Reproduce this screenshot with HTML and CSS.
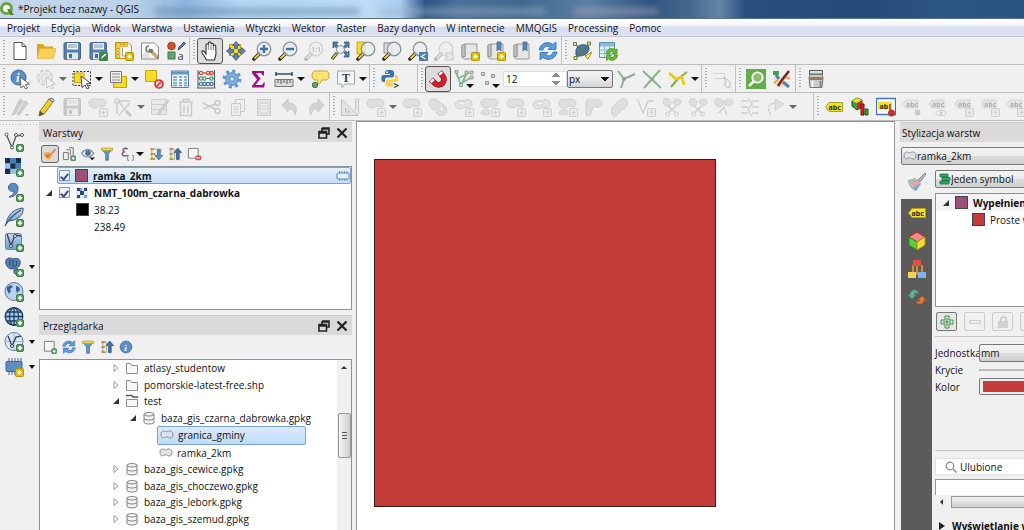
FILE: index.html
```html
<!DOCTYPE html>
<html lang="pl">
<head>
<meta charset="utf-8">
<title>*Projekt bez nazwy - QGIS</title>
<link rel="stylesheet" href="styles.css">
</head>
<body>
<svg class="sprite" aria-hidden="true">
<defs>
<linearGradient id="gb" x1="0" y1="0" x2="0" y2="1"><stop offset="0" stop-color="#c3d9ee"/><stop offset="1" stop-color="#6f9ccb"/></linearGradient>
<symbol id="b-plus" viewBox="0 0 20 20"><rect x="12.500" y="12.500" width="7" height="7" rx="1.500" fill="#5b9b62" stroke="#3f7d48"/><path d="M16 13.800v4.400M13.800 16h4.400" stroke="#fff" stroke-width="1.600"/></symbol>
<symbol id="b-star" viewBox="0 0 20 20"><rect x="11.500" y="11.500" width="8" height="8" rx="1" fill="#e2b714" stroke="#b28f10"/><path d="M15.500 13v5M13 15.500h5M13.800 13.800l3.400 3.400M17.200 13.800l-3.400 3.400" stroke="#fff8d0"/></symbol>
<symbol id="b-box" viewBox="0 0 20 20"><rect x="11.500" y="11.500" width="8" height="8" rx="1" fill="#ddd" stroke="#888"/><path d="M15.500 13.500v4M13.500 15.500h4" stroke="#888"/></symbol>
<symbol id="lens" viewBox="0 0 20 20"><path d="M7.500 12.500L2 18" stroke="#2d2d1d" stroke-width="3.600" stroke-linecap="round"/><path d="M7 13l-4.500 4.500" stroke="#edcf3a" stroke-width="1.800"/><circle cx="12" cy="8" r="6.800" fill="#e9eef2" fill-opacity=".8" stroke="#8a9299" stroke-width="1.300"/></symbol>
<symbol id="new" viewBox="0 0 20 20"><path d="M4 1.500h8l4 4v13H4z" fill="#fff" stroke="#555"/><path d="M12 1.500v4h4" fill="none" stroke="#555"/></symbol>
<symbol id="open" viewBox="0 0 20 20"><path d="M1 17V3h6l1.500 2.500H17V9" fill="#d9a521"/><path d="M1 17.500L3.500 7.500H20l-2.500 10z" fill="#f8cf58" stroke="#e3b02f" stroke-width=".6"/></symbol>
<symbol id="save" viewBox="0 0 20 20"><rect x="2" y="1.500" width="16.500" height="17" rx="1.500" fill="#5580ad" stroke="#3f6691"/><path d="M5 2h11v6.500H5z" fill="#eef3f7"/><path d="M6 4h9M6 6h9" stroke="#8298ae"/><path d="M5 11.500h11v7H5z" fill="#dfe5ea"/><path d="M7 13h3v4H7z" fill="#456d98"/></symbol>
<symbol id="saveas" viewBox="0 0 20 20"><use href="#save"/><rect x="11" y="11" width="9" height="9" rx="1.500" fill="#3f8549"/><path d="M13 18l1-2.500 3.500-3 1 1-3.500 3z" fill="#fff"/></symbol>
<symbol id="layout" viewBox="0 0 20 20"><path d="M1.500 1.500H14l3.500 3.500v12.500h-16z" fill="#fff" stroke="#b99115"/><path d="M2 2h11.500v3.500H6V17H2z" fill="#f5cf43" stroke="#c79c1b" stroke-width=".7"/><path d="M4 7v1m0 2v1m0 2v1M7 3v1m3-1v1" stroke="#8c6b0c"/><path d="M8.500 7v8h3" fill="none" stroke="#999"/><use href="#b-star"/></symbol>
<symbol id="laymgr" viewBox="0 0 20 20"><path d="M1.500 2h13l4 4v12h-17z" fill="#fff" stroke="#888"/><path d="M2 14l4-4 6 7H2z" fill="#e3e3e3"/><path d="M10 9l7 7" stroke="#777" stroke-width="3" stroke-linecap="round"/><path d="M12.500 11.500l4.500 4.500" stroke="#e3bd37" stroke-width="2"/><path d="M9 5a3 3 0 1 0 3 3" fill="none" stroke="#777" stroke-width="1.500"/></symbol>
<symbol id="style" viewBox="0 0 20 20"><circle cx="5.500" cy="5" r="3.800" fill="#d0532d" stroke="#a63c20"/><path d="M12 9l1-3 5-5 1.500 1.500-5 5z" fill="#5b7fa6" stroke="#38577b"/><rect x="2" y="11" width="7" height="7" fill="#62a56b" stroke="#3c7c45"/><text x="11.500" y="18.500" class="g10">a</text></symbol>
<symbol id="hand" viewBox="0 0 20 20"><path d="M6.500 19C5 16 3 13.500 2 11.500c-.6-1.800 1.400-2.200 2.300-.8L6 13V4c0-1.700 2.200-1.700 2.300 0L8.500 2c.2-1.600 2.300-1.500 2.400 0l.2 1.200c.3-1.400 2.200-1.200 2.300.2v1.500c.3-1.300 2.200-1.100 2.300.3L16 13l-1.500 6z" fill="#fff" stroke="#333" stroke-width="1.100"/><path d="M8.300 4v5M11 3.500V9M13.400 5v4" stroke="#555" stroke-width=".8"/></symbol>
<symbol id="pansel" viewBox="0 0 20 20"><rect x="3.500" y="3.500" width="11" height="11" fill="#f5dd27" stroke="#bd9e13"/><path d="M10 .500l3.500 4h-2v3h-3v-3h-2zM10 19.500l3.500-4h-2v-3h-3v3h-2zM.500 10l4-3.500v2h3v3h-3v2zM19.500 10l-4-3.500v2h-3v3h3v2z" fill="#6085b0" stroke="#34567f" stroke-width=".8"/></symbol>
<symbol id="zin" viewBox="0 0 20 20"><use href="#lens"/><path d="M12 4v8M8 8h8" stroke="#41729f" stroke-width="2.400"/></symbol>
<symbol id="zout" viewBox="0 0 20 20"><use href="#lens"/><path d="M8 8h8" stroke="#41729f" stroke-width="2.400"/></symbol>
<symbol id="z11" viewBox="0 0 20 20"><use href="#lens"/><text x="7" y="11" class="g8">1:1</text></symbol>
<symbol id="zfull" viewBox="0 0 20 20"><path d="M3 1h5L6.500 3.500 9 6 7 7 4.500 5.500 3 7zM19 1h-5l1.500 2.500L13 6l2 1 2.500-1.500L19 7zM19 16h-5l1.500-2.500L13 11l2-1 2.500 1.500L19 10z" fill="#4c7dad" stroke="#2f587f" stroke-width=".8"/><circle cx="10.500" cy="8.500" r="4" fill="#eee" stroke="#888"/><path d="M7 12l-5 6" stroke="#333" stroke-width="3.200"/><path d="M6.500 12.500l-4 5" stroke="#edcf3a" stroke-width="1.500"/></symbol>
<symbol id="zsel" viewBox="0 0 20 20"><path d="M1 1h8v12H1z" fill="#f5dd27" stroke="#c2a318"/><use href="#lens"/></symbol>
<symbol id="zlay" viewBox="0 0 20 20"><path d="M2 2h8v10H2z" fill="#ddd" stroke="#888"/><use href="#lens"/></symbol>
<symbol id="zlast" viewBox="0 0 20 20"><use href="#lens"/><rect x="11" y="11" width="9" height="9" fill="#4c7dad"/><path d="M17.500 13l-4 2.500 4 2.500" fill="none" stroke="#fff" stroke-width="1.400"/></symbol>
<symbol id="znext" viewBox="0 0 20 20"><use href="#lens"/><rect x="11" y="11" width="9" height="9" fill="#aaa"/><path d="M13.500 13l4 2.500-4 2.500" fill="none" stroke="#fff" stroke-width="1.400"/></symbol>
<symbol id="book" viewBox="0 0 20 20"><path d="M2 4v12.500L4.500 18H17V3H5v12.500H2.500" fill="#e6e6e6" stroke="#999"/><path d="M2 4l3-1v12.500H2z" fill="#c4c4c4" stroke="#888" stroke-width=".7"/></symbol>
<symbol id="mapnew" viewBox="0 0 20 20"><use href="#book"/><use href="#b-star"/></symbol>
<symbol id="bmnew" viewBox="0 0 20 20"><use href="#book"/><path d="M11 1h4v9l-2-2-2 2z" fill="#5b86b5" stroke="#34608f" stroke-width=".7"/><use href="#b-star"/></symbol>
<symbol id="bm" viewBox="0 0 20 20"><use href="#book"/><path d="M11 1h4v9l-2-2-2 2z" fill="#5b86b5" stroke="#34608f" stroke-width=".7"/></symbol>
<symbol id="refresh" viewBox="0 0 20 20"><path d="M1 9C2 3 9-1 15 3.500L18 1v7.500h-8L12.500 6C9 4 5.500 6 5 9z" fill="#5b9bd8" stroke="#2f70b0" stroke-width=".8"/><path d="M19 11c-1 6-8 10-14 5.500L2 19v-7.500h8L7.500 14c3.500 2 7 0 7.500-3z" fill="#5b9bd8" stroke="#2f70b0" stroke-width=".8"/></symbol>
<symbol id="topo" viewBox="0 0 20 20"><path d="M4 10C4 6 8 3 13 4c5 0 5 5 2 8s-9 4-11 2z" fill="#4d79a8" stroke="#2f577f"/><path d="M3 3l8 7 6-7M4 17l7-7 4 7" fill="none" stroke="#567a47" stroke-width="1.200"/><path d="M1.500 1.500h3v3h-3zM15.500 1h3v3h-3zM2 15.500h3v3H2z" fill="#f4e68b" stroke="#667d3a"/><path d="M13 15l3 3 4-7z" fill="#ffe98a" stroke="#a38a2c"/></symbol>
<symbol id="tabref" viewBox="0 0 20 20"><path d="M1.500 1.500h15v15h-15z" fill="#e5f0f7" stroke="#5d92b5"/><path d="M2 2h14v3.500H2z" fill="#8fbad6"/><path d="M1.500 9h15M1.500 12.500h15M6.500 2v14M11.500 2v14" stroke="#8fbad6"/><path d="M8 13c0-5 6-7 9-4l2-1v5h-5l1.500-2c-2-1.500-4 0-4.500 2zM19.500 14c0 5-6 7-9 4l-2 1.500V14h5L12 16c2 1.500 4.500 0 4.500-2z" fill="#6abd2e" stroke="#3f8a14" stroke-width=".7"/></symbol>
<symbol id="info" viewBox="0 0 20 20"><circle cx="8.500" cy="8.500" r="7.500" fill="#5c8fc6" stroke="#3c6c9f"/><text x="6" y="13" class="gi">i</text><path d="M10 8l9.500 7-4 .500 2 3.500-2 1-2-3.500L11 19z" fill="#fff" stroke="#444" stroke-width=".8"/></symbol>
<symbol id="action" viewBox="0 0 20 20"><circle cx="9" cy="8.500" r="7" fill="none" stroke="#999" stroke-width="2.500" stroke-dasharray="4 1.500"/><circle cx="9" cy="8.500" r="4" fill="#ddd" stroke="#888"/><path d="M10 8l9.500 7-4 .500 2 3.500-2 1-2-3.500L11 19z" fill="#fff" stroke="#444" stroke-width=".8"/></symbol>
<symbol id="select" viewBox="0 0 20 20"><path d="M1 2.500h17.500v14H1z" fill="none" stroke="#333" stroke-dasharray="2 1.500"/><path d="M2.500 4H12v9.500H2.500z" fill="#f5dd27" stroke="#c2a318"/><path d="M9 7l10 7.500-4.500.300L17 19l-2 1-2-4-3 2.500z" fill="#fff" stroke="#333" stroke-width=".9"/></symbol>
<symbol id="selval" viewBox="0 0 20 20"><path d="M5.500 7.500h13v11h-13z" fill="#f5dd27" stroke="#c2a318"/><path d="M2.500 2.500h11v11h-11z" fill="#f2f2ee" stroke="#777"/><path d="M4 5h8M4 8h8M4 11h8" stroke="#888"/></symbol>
<symbol id="desel" viewBox="0 0 20 20"><path d="M1.500 1.500h11v11h-11z" fill="#f5dd27" stroke="#c2a318"/><circle cx="15" cy="15" r="4" fill="#f4c9c9" stroke="#d2353b" stroke-width="1.700"/><path d="M12.500 17.500l5-5" stroke="#d2353b" stroke-width="1.500"/></symbol>
<symbol id="table" viewBox="0 0 20 20"><path d="M1.500 2h17v16.500h-17z" fill="#eaf2fa" stroke="#4d80b4"/><path d="M2 2.500h16v3H2z" fill="#6597cb"/><path d="M3 8h4M3 11h4M3 14h4M3 16.500h4M9 8h3M9 11h3M9 14h3M9 16.500h3M14 8h3M14 11h3M14 14h3M14 16.500h3" stroke="#7298be" stroke-width="1.300"/></symbol>
<symbol id="abacus" viewBox="0 0 20 20"><path d="M2 1v18M18.500 1v18M2 4h16.500M2 9.500h16.500M2 15h16.500M1 19h18.500" stroke="#555" fill="none"/><g stroke-width="1.200" fill="#fff"><g stroke="#d4403a"><circle cx="5" cy="4" r="1.600"/><circle cx="12" cy="4" r="1.600"/><circle cx="15.500" cy="4" r="1.600"/></g><g stroke="#4b9a56"><circle cx="5" cy="9.500" r="1.600"/><circle cx="8.500" cy="9.500" r="1.600"/><circle cx="15.500" cy="9.500" r="1.600"/></g><g stroke="#4377ad"><circle cx="5" cy="15" r="1.600"/><circle cx="8.500" cy="15" r="1.600"/><circle cx="12" cy="15" r="1.600"/><circle cx="15.500" cy="15" r="1.600"/></g></g></symbol>
<symbol id="gear" viewBox="0 0 20 20"><circle cx="10" cy="10" r="8" fill="none" stroke="#5f95d1" stroke-width="3" stroke-dasharray="3.100 3.180"/><circle cx="10" cy="10" r="6.300" fill="#7dace0" stroke="#4f86c2"/><circle cx="10" cy="10" r="2.200" fill="#f0f0f0" stroke="#4f86c2"/></symbol>
<symbol id="sigma" viewBox="0 0 20 20"><path d="M4 2h12v4.500h-1.500C14 4.500 13 4 11.500 4H8l4.500 5.500L7.500 16H13c1.500 0 2.300-1 2.700-2.500H17L16 18.500H4V17l5-6.500L4 4z" fill="#9b1089"/></symbol>
<symbol id="ruler" viewBox="0 0 20 20"><path d="M2 5h16M2 3v4M18 3v4" stroke="#2b4d72" stroke-width="1.500"/><path d="M1 10.500h18v7H1z" fill="#ddd" stroke="#777"/><path d="M4 11v3M7 11v4M10 11v3M13 11v4M16 11v3" stroke="#555"/></symbol>
<symbol id="tip" viewBox="0 0 20 20"><path d="M5 2h11c4 0 4 9 0 9h-4c-1 3-3 4-5 5l1-5H5C1 11 1 2 5 2z" fill="#f7e474" stroke="#bba937"/><circle cx="5" cy="16" r="2.700" fill="#67a06f" stroke="#407649"/></symbol>
<symbol id="annot" viewBox="0 0 20 20"><path d="M1.500 2h17v13H9l-3 3.500V15H1.500z" fill="#f3f7f9" stroke="#9aa9b2"/><text x="6" y="12.500" class="gt">T</text></symbol>
<symbol id="python" viewBox="0 0 20 20"><path d="M9 1c-4 0-4 1.500-4 4h5v1H3.500C.500 6 .500 13 3.500 13H5v-2c0-2 1-2.500 3-2.500h4c1.500 0 2.200-1 2.200-2.200V4C14.200 1.500 12 1 9 1z" fill="#3b74a8"/><path d="M10 17.500c4 0 4-1.500 4-3.500H9.500v-1H16c3 0 3-7 0-7h-1v2.500c0 1.500-1 2-3 2H8c-1.500 0-2.500.800-2.500 2.200V15c0 2 2 2.500 4.500 2.500z" fill="#fbd043"/><circle cx="7" cy="3.200" r=".9" fill="#fff"/><path d="M14 14.500l4 2-4 2" fill="none" stroke="#444" stroke-width="1.300"/></symbol>
<symbol id="magnet" viewBox="0 0 20 20"><path d="M3 10.500l4.500 4.300c5 3.700 11.500-3 7-8L11.500 3" fill="none" stroke="#8e0d14" stroke-width="5.600"/><path d="M3.300 10.800l4.200 4c5 3.700 11.500-3 7-8L11.800 3.400" fill="none" stroke="#d3202a" stroke-width="4.200"/><path d="M3.300 10.800l1.900 1.800M11.800 3.400l1.500 1.900" stroke="#fff" stroke-width="4.200"/></symbol>
<symbol id="vsnap" viewBox="0 0 20 20"><path d="M2 3l5 13 6-12M5 9l10-5M8 14l8-5" fill="none" stroke="#86b68c" stroke-width="1.800"/><path d="M1 1.500h3v3H1zM11 2h3v3h-3zM16 2h3v3h-3zM16 7h3v3h-3zM5.500 14.500h3v3h-3z" fill="#ccc" stroke="#839587" stroke-width=".8"/><path d="M12 15h8l-4 4z" fill="#111"/></symbol>
<symbol id="dots" viewBox="0 0 20 20"><path d="M1.500 3.500h3v3h-3zM11.500 5.500h3v3h-3zM5.500 12.500h3v3h-3z" fill="#ccc" stroke="#999"/><path d="M12 15h8l-4 4z" fill="#111"/></symbol>
<symbol id="tr1" viewBox="0 0 20 20"><path d="M2 2l6 8-3 9M8 10l11-5" fill="none" stroke="#86b68c" stroke-width="2"/><circle cx="8" cy="10" r="2" fill="#999"/></symbol>
<symbol id="tr2" viewBox="0 0 20 20"><path d="M1 2l18 17M18 1L2 19" stroke="#86b68c" stroke-width="2"/><circle cx="10" cy="10.500" r="1.800" fill="#999"/></symbol>
<symbol id="tr3" viewBox="0 0 20 20"><path d="M3 18l5-6 3-3 8-6" fill="none" stroke="#7caf4c" stroke-width="2"/><path d="M1 4l7 6 6-2 2 8" fill="none" stroke="#ecc715" stroke-width="2.600"/></symbol>
<symbol id="advdig" viewBox="0 0 20 20"><path d="M1.500 4.500h11v5h-11" fill="none" stroke="#777" stroke-dasharray="2 1"/><path d="M12 8l6 5v5l-3 1-3-4 2-1z" fill="#eee" stroke="#555"/></symbol>
<symbol id="search" viewBox="0 0 20 20"><path d="M0 0h20v20H0z" fill="#65ac49"/><circle cx="11.500" cy="8.500" r="5.200" fill="#84c168" stroke="#fff" stroke-width="1.800"/><path d="M7.500 12.500L3 17" stroke="#fff" stroke-width="2.500"/></symbol>
<symbol id="tools" viewBox="0 0 20 20"><path d="M1 2h6v4H1z" fill="#3fa551"/><path d="M2 9l7-2 8 8-6 4-8-3z" fill="#f1e2b4"/><path d="M4 6l3 4M11 13l6 5" stroke="#4d82bf" stroke-width="3"/><path d="M17 2l-7 9-4 6" stroke="#7c2420" stroke-width="2.600" fill="none"/><path d="M2 14l4-3M14 8l4 2" stroke="#e7a34f" stroke-width="2"/></symbol>
<symbol id="jar" viewBox="0 0 20 20"><path d="M4 5h12l1 4-1 9.500H4L3 9z" fill="#c9c9c9" stroke="#777"/><path d="M3.500 1.500h13v3.500h-13z" fill="#e2e2e2" stroke="#555"/><path d="M3 8h14v3H3z" fill="#a67462"/><path d="M6.500 12v6" stroke="#fff" stroke-width="2"/><path d="M14.500 12v6" stroke="#888" stroke-width="2"/></symbol>
<symbol id="pencils" viewBox="0 0 20 20"><path d="M2 18L10 2l3 2-8 13zM7 18l8-14 3 2-8 11z" fill="#888" stroke="#666"/><path d="M15 17h4l-2 2z" fill="#222"/></symbol>
<symbol id="pencil" viewBox="0 0 20 20"><path d="M4 14L13 2l4 3-9 12-5 2z" fill="#f0d02f" stroke="#8e7a1b"/><path d="M13 2l4 3 1-1.500c0-2-3-3-4-2z" fill="#ccc" stroke="#777"/><path d="M3 19l1-5 4 3z" fill="#555"/></symbol>
<symbol id="blob" viewBox="0 0 20 20"><path d="M1 6c0-4 5-5 8-3 3-2 9-1 9 3 0 5-5 4-7 3-3 3-10 3-10-3z" fill="#bbb" stroke="#888"/></symbol>
<symbol id="addf" viewBox="0 0 20 20"><use href="#blob"/><use href="#b-box"/></symbol>
<symbol id="ring" viewBox="0 0 20 20"><path d="M1 8c0-4 5-6 8-4 3-3 9-1 9 2 0 5-4 5-7 4-3 3-10 2-10-2z" fill="#ccc" stroke="#888"/><ellipse cx="8" cy="6.500" rx="3.500" ry="1.800" fill="#fff" stroke="#888"/><use href="#b-box"/></symbol>
<symbol id="part" viewBox="0 0 20 20"><use href="#blob"/><path d="M1 17c0-4 3-5 8-4v5z" fill="#bbb" stroke="#888"/><use href="#b-box"/></symbol>
<symbol id="simp" viewBox="0 0 20 20"><path d="M1 5c1-5 9-3 11 1 7 1 9 9 4 12-5 2-8-1-8-5-5 0-7-4-7-8z" fill="#bbb" stroke="#888"/><path d="M10 10h7l-3 6z" fill="#eee" stroke="#888"/></symbol>
<symbol id="offset" viewBox="0 0 20 20"><path d="M2 17C0 11 3 9 9 4c4-5 10-1 8 4-2 4-6 5-9 9-2 3-5 3-6 0z" fill="#bbb" stroke="#888"/></symbol>
<symbol id="resh" viewBox="0 0 20 20"><path d="M2 18V6c0-5 5-4 8-3 4-1 9 0 8 4s-6 3-9 3l-2 6c-1 3-4 3-5 2z" fill="#bbb" stroke="#888"/></symbol>
<symbol id="node" viewBox="0 0 20 20"><path d="M3 2v15M3 4h13M4 4l11 13M16 6L5 18" fill="none" stroke="#888" stroke-width="1.500"/><path d="M1 2h4v4H1z" fill="#ccc" stroke="#888"/><path d="M12 14l5 5" stroke="#777" stroke-width="3"/></symbol>
<symbol id="multi" viewBox="0 0 20 20"><path d="M1.500 2.500h15v15h-15zM1.500 7.500h15M1.500 12.500h15" fill="#ddd" stroke="#888"/><path d="M7 17L17 3l2 1L9 18z" fill="#999" stroke="#777"/></symbol>
<symbol id="trash" viewBox="0 0 20 20"><path d="M3 5h14M7 5V2.500h6V5M4.500 5v13.500h11V5M8 8v8M12 8v8" fill="none" stroke="#777" stroke-width="1.500"/></symbol>
<symbol id="cut" viewBox="0 0 20 20"><path d="M1 6l12 6M1 12l12-5" stroke="#777" stroke-width="1.600"/><circle cx="15.500" cy="6" r="2.500" fill="none" stroke="#777" stroke-width="1.500"/><circle cx="15.500" cy="14" r="2.500" fill="none" stroke="#777" stroke-width="1.500"/></symbol>
<symbol id="copy" viewBox="0 0 20 20"><path d="M7.500 2.500h9v12h-9z" fill="#eee" stroke="#777"/><path d="M3.500 6.500h9v12h-9z" fill="#eee" stroke="#777"/><path d="M5.500 10h5M5.500 12.500h5M5.500 15h5" stroke="#888"/></symbol>
<symbol id="paste" viewBox="0 0 20 20"><path d="M3.500 2.500h13v16h-13z" fill="#ccc" stroke="#777"/><path d="M6 6h8v10H6z" fill="#eee" stroke="#888"/><path d="M7.500 9h5M7.500 12h5" stroke="#888"/></symbol>
<symbol id="undo" viewBox="0 0 20 20"><path d="M2 8l6-6v4c8 0 10 5 7 12-1-5-3-6-7-6v3z" fill="#999" stroke="#777"/></symbol>
<symbol id="redo" viewBox="0 0 20 20"><path d="M18 8l-6-6v4c-8 0-10 5-7 12 1-5 3-6 7-6v3z" fill="#999" stroke="#777"/></symbol>
<symbol id="tri" viewBox="0 0 20 20"><path d="M1.500 2v16.500H18z" fill="#ccc" stroke="#555"/><path d="M5.500 11v4h4z" fill="#fff" stroke="#555"/><path d="M15.500 14V2h3v15" fill="#ddd" stroke="#666"/></symbol>
<symbol id="vline" viewBox="0 0 20 20"><path d="M2 3l5 13L12 4h6" fill="none" stroke="#888" stroke-width="1.300"/><circle cx="2" cy="3" r="1.500" fill="#bbb"/><use href="#b-box"/></symbol>
<symbol id="split" viewBox="0 0 20 20"><path d="M1 5c0-5 7-4 8 0 0 5-7 6-8 0zM11 5c1-4 8-4 8 0s-7 5-8 0z" fill="#bbb" stroke="#888"/><path d="M6 9l8 7M14 9l-8 7" stroke="#888" stroke-width="1.400"/><circle cx="5.500" cy="17" r="2" fill="none" stroke="#888"/><circle cx="14.500" cy="17" r="2" fill="none" stroke="#888"/></symbol>
<symbol id="merge" viewBox="0 0 20 20"><path d="M1 5c0-5 7-4 9 0 2-4 9-4 9 0s-7 5-9 1c-2 5-9 5-9-1z" fill="#bbb" stroke="#888"/><path d="M5 16l5-6 3 8" fill="none" stroke="#888" stroke-width="1.400"/></symbol>
<symbol id="trim" viewBox="0 0 20 20"><path d="M1 4h7M12 4h7M1 10h7M12 10h7M1 16h7M12 16h7M8 1l4 6-4 6 4 6" fill="none" stroke="#888" stroke-width="1.300"/></symbol>
<symbol id="rot" viewBox="0 0 20 20"><path d="M5 18c-5-5-2-12 5-12" fill="none" stroke="#888" stroke-width="1.500" stroke-dasharray="3 1"/><path d="M9 2l9 5-9 6z" fill="#bbb" stroke="#888"/></symbol>
<symbol id="abc" viewBox="0 0 20 20"><path d="M1.500 10L5 5.500h13.500v9H5z" fill="#f2e22c" stroke="#b3a217"/><text x="4.500" y="13" class="ga">abc</text></symbol>
<symbol id="diag" viewBox="0 0 20 20"><path d="M2 4l5-3 5 2v7l-5 3-5-4z" fill="#37a33c" stroke="#1e5524"/><path d="M7 6l5-3v7l-5 3z" fill="#d22"/><path d="M2 4l5-3 5 2-5 3z" fill="#f2e22c"/><path d="M11 7h3v11h-3z" fill="#d22" stroke="#611"/><path d="M15 12h3v6h-3z" fill="#37a33c" stroke="#1e5524"/></symbol>
<symbol id="abpin" viewBox="0 0 20 20"><path d="M.500 1.500h19v16H.500z" fill="#fff" stroke="#3b74c4" stroke-width="1.300"/><path d="M2 4.500h14v8H2z" fill="#f2e22c"/><text x="3.500" y="11.500" class="ga">ab</text><path d="M14 7v8" stroke="#a33" stroke-width="1.500"/><circle cx="15.500" cy="16" r="3.500" fill="#c33036"/></symbol>
<symbol id="abg" viewBox="0 0 20 20"><path d="M1 7l3-4h12v8H4z" fill="#ccc" stroke="#999"/><text x="4" y="10" class="ga">abc</text><circle cx="15.500" cy="15.500" r="3" fill="#777"/></symbol>
<symbol id="abe" viewBox="0 0 20 20"><path d="M1 7l3-4h12v8H4z" fill="#ccc" stroke="#999"/><text x="4" y="10" class="ga">abc</text><ellipse cx="13" cy="16" rx="5" ry="2.500" fill="#fff" stroke="#777"/><circle cx="13" cy="16" r="1.700" fill="#777"/></symbol>
<symbol id="abb" viewBox="0 0 20 20"><path d="M1 7l3-4h12v8H4z" fill="#ccc" stroke="#999"/><text x="4" y="10" class="ga">abc</text><use href="#b-box"/></symbol>
<symbol id="l1" viewBox="0 0 20 20"><path d="M2.500 3L8 15.500 12 4l6-1" fill="none" stroke="#4d5a5f" stroke-width="1.300"/><g fill="#fff" stroke="#4d5a5f"><circle cx="2.500" cy="2.500" r="1.500"/><circle cx="12" cy="3" r="1.500"/><circle cx="18" cy="3" r="1.500"/><circle cx="8" cy="15.500" r="1.500"/></g><use href="#b-plus"/></symbol>
<symbol id="rast" viewBox="0 0 20 20"><path d="M1 1h16v16H1z" fill="#9dbfe0"/><path d="M1 1h5.300v5.300H1zM11.700 1H17v5.300h-5.300zM6.300 6.300h5.400v5.400H6.300zM1 11.700h5.300V17H1z" fill="#182f4d"/><path d="M6.300 1h5.400v5.300H6.300zM11.700 6.300H17v5.400h-5.300z" fill="#4b7cae"/></symbol>
<symbol id="rastsm" viewBox="0 0 12 12"><path d="M0 0h12v12H0z" fill="#dfeaf4"/><path d="M1 1h3v3H1zM8 1h3v3H8zM4 4h4v4H4zM1 8h3v3H1z" fill="#2c4768"/><path d="M8 8h3v3H8zM4 1h2v3H4z" fill="#7aa2c9"/></symbol>
<symbol id="l2" viewBox="0 0 20 20"><use href="#rast"/><use href="#b-plus"/></symbol>
<symbol id="l3" viewBox="0 0 20 20"><path d="M5 15c4-2 5-4 5-6-3 1-6-1-5.500-4C5 0 14 0 14 6c0 5-3 9-9 9z" fill="#5e8cbd" stroke="#3c658e"/><use href="#b-plus"/></symbol>
<symbol id="l4" viewBox="0 0 20 20"><path d="M2 17C4 7 10 2 19 1c1 6-4 12-14 13" fill="url(#gb)" stroke="#37597d"/><path d="M1 19C5 12 10 7 17 3" fill="none" stroke="#37597d" stroke-width="1.300"/><use href="#b-plus"/></symbol>
<symbol id="l5" viewBox="0 0 20 20"><rect x="1.500" y="1.500" width="16" height="16" rx="2" fill="url(#gb)" stroke="#6483a1"/><path d="M3 2l4 12 4-11 6 1" fill="none" stroke="#37424d" stroke-width="1.300"/><circle cx="7" cy="14" r="1.500" fill="#fff" stroke="#37424d"/><circle cx="11" cy="4" r="1.500" fill="#fff" stroke="#37424d"/><use href="#b-plus"/></symbol>
<symbol id="l6" viewBox="0 0 20 20"><path d="M2 3c2-3 5-2 7-1 3-1 6-1 7 2 1 3-1 6-3 7v5c-1 2-3 1-3-1v-4l-3 1C3 11 1 7 2 3z" fill="#5582b2" stroke="#2c5280"/><path d="M6 3v6M9 3v7M12 4c1 2 1 4-1 6" fill="none" stroke="#24466f"/><use href="#b-plus"/></symbol>
<symbol id="l7" viewBox="0 0 20 20"><circle cx="10" cy="9.500" r="9" fill="#b7d2ea" stroke="#55789c"/><path d="M3 5l4-2 2 2-3 2 1 2-2 3-2-4zM12 4l3 1 1 3-3 3-1-3z" fill="#345f8f"/><use href="#b-plus"/></symbol>
<symbol id="l8" viewBox="0 0 20 20"><circle cx="10" cy="9.500" r="8.700" fill="#aecbe6" stroke="#203f66" stroke-width="1.500"/><path d="M1 9.500h18M3 5h14M3 14h14M10 1v17" stroke="#203f66" stroke-width="1.300"/><ellipse cx="10" cy="9.500" rx="4.500" ry="8.700" fill="none" stroke="#203f66" stroke-width="1.200"/><use href="#b-plus"/></symbol>
<symbol id="l9" viewBox="0 0 20 20"><circle cx="10" cy="9.500" r="9" fill="#dbe8f4" stroke="#5b86b5"/><path d="M1 9.500h18M10 1v17" stroke="#9dbddc"/><path d="M4 4l4 10 4-9 5-1" fill="none" stroke="#37424d" stroke-width="1.300"/><circle cx="8" cy="14" r="1.500" fill="#fff" stroke="#37424d"/><use href="#b-plus"/></symbol>
<symbol id="l10" viewBox="0 0 20 20"><path d="M5 1v17M8 1v17M11 1v17M14 1v17M17 1v17" stroke="#4a6a8c"/><rect x="2" y="4.500" width="16" height="10" rx="1" fill="#5b8fc5" stroke="#3a6799"/><use href="#b-star"/></symbol>
<symbol id="brush" viewBox="0 0 20 20"><path d="M17 2l2 1-6 8-2-2z" fill="#c98f4b"/><path d="M1 8l8-1 5 5-5 6C4 17 1 13 1 8z" fill="#f3b04e"/><path d="M3 12l9-3-5 7z" fill="#e3603f"/></symbol>
<symbol id="brush2" viewBox="0 0 20 20"><path d="M18 1l1 1-6 8-2-2z" fill="#bbb" stroke="#888"/><path d="M1 8l7-2 6 6-5 7C5 18 1 14 1 8z" fill="#9ac6a0"/><path d="M3 12l7-5 4 5-8 4z" fill="#e0a6b5"/><path d="M6 16l8-5-5 8z" fill="#7ba4cf"/></symbol>
<symbol id="addg" viewBox="0 0 20 20"><path d="M2 8h7v10H2zM6 4h6v8M10 1h6v11" fill="#eee" stroke="#777" stroke-width="1.400"/><use href="#b-plus"/></symbol>
<symbol id="eye" viewBox="0 0 20 20"><path d="M1 9c4-7 13-7 17 0-4 7-13 7-17 0z" fill="#eef" stroke="#70808e" stroke-width="1.500"/><circle cx="10" cy="8.500" r="4" fill="#4a6f95"/><path d="M12 15h8l-4 4z" fill="#111"/></symbol>
<symbol id="funnel" viewBox="0 0 20 20"><path d="M2 3h16l-6 7v9H8v-9z" fill="#6594c7" stroke="#3f6e9f"/><path d="M2 1.500h16v3.500H2z" fill="#f0d64a" stroke="#b6a02a"/></symbol>
<symbol id="eps" viewBox="0 0 20 20"><path d="M11 3C6 0 2 4 6 7c-5 2-3 8 5 5" fill="none" stroke="#83517a" stroke-width="2"/><path d="M13 12h-2v7h2M17 12h2v7h-2" fill="none" stroke="#888" stroke-width="1.400"/></symbol>
<symbol id="exp" viewBox="0 0 20 20"><path d="M2 3h5M2 10h7M2 17h7" stroke="#d99e24" stroke-width="3"/><path d="M4 2v16M7 3h10v5" fill="none" stroke="#888"/><path d="M12 4h4v8h3.500L14 18.500 8.500 12H12z" fill="#5a8fc9" stroke="#315f92"/></symbol>
<symbol id="col" viewBox="0 0 20 20"><path d="M2 3h5M2 10h5M2 17h5" stroke="#d99e24" stroke-width="3"/><path d="M4 2v16h5V3H4" fill="none" stroke="#888"/><path d="M12 18h4V8h3.500L14 1.500 8.500 8H12z" fill="#406f9f" stroke="#2c5279"/></symbol>
<symbol id="rem" viewBox="0 0 20 20"><path d="M2 2h14v14H2z" fill="#f4f4f4" stroke="#777" stroke-width="1.300"/><rect x="12" y="12" width="8" height="7" rx="2" fill="#d6484c"/><path d="M13.500 15.500h5" stroke="#fff" stroke-width="1.600"/></symbol>
<symbol id="addl" viewBox="0 0 20 20"><path d="M2 2h14v14H2z" fill="#f4f4f4" stroke="#777" stroke-width="1.300"/><use href="#b-plus"/></symbol>
<symbol id="inf2" viewBox="0 0 20 20"><circle cx="10" cy="10" r="8.500" fill="#5c8fc6" stroke="#3c6c9f"/><text x="7.500" y="15" class="gi">i</text></symbol>
<symbol id="float" viewBox="0 0 12 12"><path d="M4 1h7v6H9M4 1v3M4 2h7" fill="none" stroke="#222" stroke-width="1.600"/><path d="M1 4.500h7.500V11H1zM1 6h7" fill="none" stroke="#222" stroke-width="1.600"/></symbol>
<symbol id="close" viewBox="0 0 12 12"><path d="M1.500 1.500l9 9M10.500 1.500l-9 9" stroke="#222" stroke-width="2.200"/></symbol>
<symbol id="chip" viewBox="0 0 14 12"><path d="M3.500 1v10M6 1v10M8.500 1v10M11 1v10" stroke="#7897ba"/><rect x="1" y="3" width="12" height="6" rx="1" fill="#e6f1fc" stroke="#5f83ac"/></symbol>
<symbol id="folder" viewBox="0 0 14 14"><path d="M1.500 12.500v-10h4l1 2h6v8z" fill="#f7f7f7" stroke="#8d8d8d"/></symbol>
<symbol id="folder2" viewBox="0 0 14 14"><path d="M1 1.500h6l1 1.500h5" fill="none" stroke="#555" stroke-width="1.500"/><path d="M1.500 12.500v-7h11v7z" fill="#f7f7f7" stroke="#8d8d8d"/></symbol>
<symbol id="db" viewBox="0 0 14 14"><path d="M2 3v8.500c2 2 8 2 10 0V3c-2-2-8-2-10 0z" fill="#f4f4f4" stroke="#808080"/><path d="M2 3.500c2 2 8 2 10 0M2 7.500c2 2 8 2 10 0" fill="none" stroke="#808080"/></symbol>
<symbol id="poly" viewBox="0 0 14 10"><path d="M1 4c0-4 4-3 6-2 2-2 6-1 6 2s-1 4-3 4-2-2-4-1-5 2-5-3z" fill="#dfe3e6" stroke="#8a9298"/></symbol>
<symbol id="closed" viewBox="0 0 8 8"><path d="M2 .500L6 4 2 7.500z" fill="#fff" stroke="#999"/></symbol>
<symbol id="opened" viewBox="0 0 8 8"><path d="M7 1v6H1z" fill="#333"/></symbol>
<symbol id="cube" viewBox="0 0 20 20"><path d="M10 1l8 5-8 5-8-5z" fill="#f28b8b" stroke="#c22"/><path d="M2 6l8 5v8l-8-5z" fill="#57d13c" stroke="#2c8c1a"/><path d="M18 6l-8 5v8l8-5z" fill="#f7dc2e" stroke="#b29a14"/></symbol>
<symbol id="tree3" viewBox="0 0 20 20"><path d="M6 6v8M10 6v10M15 6v8" stroke="#d58a2c" stroke-width="2"/><rect x="6" y="1" width="8" height="6" fill="#e0513e"/><rect x="1" y="13" width="8" height="6" fill="#f5d34c"/><rect x="11" y="13" width="8" height="6" fill="#84b0ea"/></symbol>
<symbol id="hist" viewBox="0 0 20 20"><path d="M11 5C8 1 3 3 3 8l-2 0 4 4 4-4H7c0-2 2-3 4-1z" fill="#6bae93" stroke="#4b8c74"/><path d="M9 15c3 4 8 2 8-2h2l-4-4-4 4h2c0 2-2 2-4 1z" fill="#e37a3d" stroke="#b6572a"/></symbol>
<symbol id="single" viewBox="0 0 12 12"><path d="M1 1h8v3H1zM3 4.500h8v3H3zM1 8h9v3H1z" fill="#2fa565" stroke="#17703f" stroke-width=".8"/></symbol>
<symbol id="plusg" viewBox="0 0 14 14"><path d="M5 1h4v4h4v4H9v4H5V9H1V5h4z" fill="#d6ecd8" stroke="#3f8a49"/><path d="M7 3v8M3 7h8" stroke="#3f8a49"/></symbol>
<symbol id="minusg" viewBox="0 0 14 14"><path d="M1.500 5.500h11v3h-11z" fill="#eee" stroke="#ccc"/></symbol>
<symbol id="lock" viewBox="0 0 14 14"><path d="M5 6V4c0-3 5-3 5 0v2" fill="none" stroke="#c6c6c6" stroke-width="1.500"/><path d="M2 6h10v7H2z" fill="#d2d2ca"/></symbol>
<symbol id="mag" viewBox="0 0 12 12"><circle cx="5" cy="5" r="3.800" fill="none" stroke="#888" stroke-width="1.200"/><path d="M8 8l3.500 3.500" stroke="#888" stroke-width="1.500"/></symbol>
<symbol id="qgis" viewBox="0 0 14 14"><circle cx="6.500" cy="6.500" r="5" fill="#fff" stroke="#68a33c" stroke-width="3"/><path d="M7 7h3l4 6h-4z" fill="#528b2e"/></symbol>
</defs>
</svg>
<div class="window">
<header class="titlebar"><svg class="s14"><use href="#qgis"/></svg><h1>*Projekt bez nazwy - QGIS</h1><i class="ghost g1"></i><i class="ghost g2"></i><i class="ghost g3"></i></header>
<nav class="menubar"><button>Projekt</button><button>Edycja</button><button>Widok</button><button>Warstwa</button><button>Ustawienia</button><button>Wtyczki</button><button>Wektor</button><button>Raster</button><button>Bazy danych</button><button>W internecie</button><button>MMQGIS</button><button>Processing</button><button>Pomoc</button></nav>
<div class="bar">
<div class="group">
<button class="tb" aria-label="Nowy"><svg><use href="#new"/></svg></button><button class="tb" aria-label="Otwórz"><svg><use href="#open"/></svg></button><button class="tb" aria-label="Zapisz"><svg><use href="#save"/></svg></button><button class="tb" aria-label="Zapisz jako"><svg><use href="#saveas"/></svg></button><button class="tb" aria-label="Nowy wydruk"><svg><use href="#layout"/></svg></button><button class="tb" aria-label="Menedżer wydruków"><svg><use href="#laymgr"/></svg></button><button class="tb" aria-label="Menedżer stylów"><svg><use href="#style"/></svg></button>
</div><div class="group">
<button class="tb on" aria-label="Przesuń"><svg><use href="#hand"/></svg></button><button class="tb" aria-label="Przesuń do zaznaczenia"><svg><use href="#pansel"/></svg></button><button class="tb" aria-label="Powiększ"><svg><use href="#zin"/></svg></button><button class="tb" aria-label="Pomniejsz"><svg><use href="#zout"/></svg></button><button class="tb off" aria-label="Skala 1:1"><svg><use href="#z11"/></svg></button><button class="tb" aria-label="Pełny zasięg"><svg><use href="#zfull"/></svg></button><button class="tb" aria-label="Powiększ do zaznaczenia"><svg><use href="#zsel"/></svg></button><button class="tb" aria-label="Powiększ do warstwy"><svg><use href="#zlay"/></svg></button><button class="tb" aria-label="Poprzedni widok"><svg><use href="#zlast"/></svg></button><button class="tb off" aria-label="Następny widok"><svg><use href="#znext"/></svg></button><button class="tb" aria-label="Nowy widok mapy"><svg><use href="#mapnew"/></svg></button><button class="tb" aria-label="Nowa zakładka"><svg><use href="#bmnew"/></svg></button><button class="tb" aria-label="Zakładki"><svg><use href="#bm"/></svg></button><button class="tb" aria-label="Odśwież"><svg><use href="#refresh"/></svg></button>
</div><div class="group last">
<button class="tb" aria-label="Sprawdzanie topologii"><svg><use href="#topo"/></svg></button><button class="tb" aria-label="Odśwież tabelę"><svg><use href="#tabref"/></svg></button>
</div>
</div>
<div class="bar">
<div class="group">
<button class="tb" aria-label="Informacje"><svg><use href="#info"/></svg></button><button class="tb menu off" aria-label="Akcje"><svg><use href="#action"/></svg></button><button class="tb menu" aria-label="Zaznacz"><svg><use href="#select"/></svg></button><button class="tb menu" aria-label="Zaznacz według wartości"><svg><use href="#selval"/></svg></button><button class="tb" aria-label="Odznacz"><svg><use href="#desel"/></svg></button><button class="tb" aria-label="Tabela atrybutów"><svg><use href="#table"/></svg></button><button class="tb" aria-label="Kalkulator pól"><svg><use href="#abacus"/></svg></button><button class="tb" aria-label="Algorytmy"><svg><use href="#gear"/></svg></button><button class="tb" aria-label="Statystyki"><svg><use href="#sigma"/></svg></button><button class="tb menu" aria-label="Pomiar"><svg><use href="#ruler"/></svg></button><button class="tb" aria-label="Podpowiedzi"><svg><use href="#tip"/></svg></button><button class="tb menu" aria-label="Opis tekstowy"><svg><use href="#annot"/></svg></button>
</div><div class="group wide">
<button class="tb" aria-label="Konsola Pythona"><svg><use href="#python"/></svg></button>
</div><div class="group">
<button class="tb on" aria-label="Przyciąganie"><svg><use href="#magnet"/></svg></button><button class="tb" aria-label="Tryb przyciągania"><svg><use href="#vsnap"/></svg></button><button class="tb" aria-label="Typ przyciągania"><svg><use href="#dots"/></svg></button><input class="num" type="number" value="12" aria-label="Tolerancja"><select class="combo unit" aria-label="Jednostka tolerancji"><option>px</option></select><button class="tb" aria-label="Edycja topologiczna"><svg><use href="#tr1"/></svg></button><button class="tb" aria-label="Przyciąganie do przecięć"><svg><use href="#tr2"/></svg></button><button class="tb menu" aria-label="Śledzenie"><svg><use href="#tr3"/></svg></button>
</div><div class="group">
<button class="tb off" aria-label="Numeryczna digitalizacja"><svg><use href="#advdig"/></svg></button>
</div><div class="group">
<button class="tb" aria-label="Szukaj"><svg><use href="#search"/></svg></button><button class="tb" aria-label="Narzędzia"><svg><use href="#tools"/></svg></button>
</div><div class="group last">
<button class="tb" aria-label="Wtyczka"><svg><use href="#jar"/></svg></button>
</div>
</div>
<div class="bar">
<div class="group">
<button class="tb off" aria-label="Bieżące edycje"><svg><use href="#pencils"/></svg></button><button class="tb" aria-label="Tryb edycji"><svg><use href="#pencil"/></svg></button><button class="tb off" aria-label="Zapisz edycje"><svg><use href="#save"/></svg></button><button class="tb off" aria-label="Dodaj obiekt"><svg><use href="#addf"/></svg></button><button class="tb menu off" aria-label="Wierzchołki"><svg><use href="#node"/></svg></button><button class="tb off" aria-label="Zmień atrybuty"><svg><use href="#multi"/></svg></button><button class="tb off" aria-label="Usuń"><svg><use href="#trash"/></svg></button><button class="tb off" aria-label="Wytnij"><svg><use href="#cut"/></svg></button><button class="tb off" aria-label="Kopiuj"><svg><use href="#copy"/></svg></button><button class="tb off" aria-label="Wklej"><svg><use href="#paste"/></svg></button><button class="tb off" aria-label="Cofnij"><svg><use href="#undo"/></svg></button><button class="tb off" aria-label="Ponów"><svg><use href="#redo"/></svg></button>
</div><div class="group wide">
<button class="tb off" aria-label="Zaawansowana digitalizacja"><svg><use href="#tri"/></svg></button><button class="tb menu off" aria-label="Przesuń obiekt"><svg><use href="#addf"/></svg></button><button class="tb off" aria-label="Obróć obiekt"><svg><use href="#addf"/></svg></button><button class="tb off" aria-label="Uprość"><svg><use href="#simp"/></svg></button><button class="tb off" aria-label="Dodaj pierścień"><svg><use href="#ring"/></svg></button><button class="tb off" aria-label="Dodaj część"><svg><use href="#part"/></svg></button><button class="tb off" aria-label="Wypełnij pierścień"><svg><use href="#addf"/></svg></button><button class="tb off" aria-label="Usuń pierścień"><svg><use href="#ring"/></svg></button><button class="tb off" aria-label="Usuń część"><svg><use href="#part"/></svg></button><button class="tb off" aria-label="Zmień kształt"><svg><use href="#resh"/></svg></button><button class="tb off" aria-label="Odsuń krzywą"><svg><use href="#offset"/></svg></button><button class="tb off" aria-label="Odwróć linię"><svg><use href="#vline"/></svg></button><button class="tb off" aria-label="Podziel obiekty"><svg><use href="#split"/></svg></button><button class="tb off" aria-label="Podziel części"><svg><use href="#split"/></svg></button><button class="tb off" aria-label="Połącz obiekty"><svg><use href="#merge"/></svg></button><button class="tb off" aria-label="Przytnij"><svg><use href="#trim"/></svg></button><button class="tb menu off" aria-label="Obróć symbole"><svg><use href="#rot"/></svg></button>
</div><div class="group last">
<button class="tb" aria-label="Etykiety"><svg><use href="#abc"/></svg></button><button class="tb" aria-label="Diagramy"><svg><use href="#diag"/></svg></button><button class="tb" aria-label="Przypięte etykiety"><svg><use href="#abpin"/></svg></button><button class="tb off" aria-label="Przypnij"><svg><use href="#abg"/></svg></button><button class="tb off" aria-label="Pokaż etykiety"><svg><use href="#abe"/></svg></button><button class="tb off" aria-label="Przesuń etykietę"><svg><use href="#abb"/></svg></button><button class="tb off" aria-label="Obróć etykietę"><svg><use href="#abb"/></svg></button><button class="tb off" aria-label="Zmień etykietę"><svg><use href="#abb"/></svg></button>
</div>
</div>
<main class="main">
<aside class="side">
<button class="sb" aria-label="Warstwa wektorowa"><svg><use href="#l1"/></svg></button><button class="sb" aria-label="Warstwa rastrowa"><svg><use href="#l2"/></svg></button><button class="sb" aria-label="Warstwa tekstowa"><svg><use href="#l3"/></svg></button><button class="sb" aria-label="SpatiaLite"><svg><use href="#l4"/></svg></button><button class="sb" aria-label="Warstwa wirtualna"><svg><use href="#l5"/></svg></button><button class="sb menu" aria-label="PostGIS"><svg><use href="#l6"/></svg></button><button class="sb menu" aria-label="WMS"><svg><use href="#l7"/></svg></button><button class="sb" aria-label="WCS"><svg><use href="#l8"/></svg></button><button class="sb menu" aria-label="WFS"><svg><use href="#l9"/></svg></button><button class="sb menu" aria-label="Warstwa tymczasowa"><svg><use href="#l10"/></svg></button>
</aside>
<div class="docks">
<section class="dock">
<div class="dtitle"><h2>Warstwy</h2><button aria-label="Odłącz"><svg class="s12"><use href="#float"/></svg></button><button aria-label="Zamknij"><svg class="s12"><use href="#close"/></svg></button></div>
<div class="dtools"><button class="on" aria-label="Stylizacja"><svg><use href="#brush"/></svg></button><button aria-label="Dodaj grupę"><svg><use href="#addg"/></svg></button><button aria-label="Widoczność"><svg><use href="#eye"/></svg></button><button aria-label="Filtr"><svg><use href="#funnel"/></svg></button><button class="menu" aria-label="Filtr wyrażeniem"><svg><use href="#eps"/></svg></button><button aria-label="Rozwiń"><svg><use href="#exp"/></svg></button><button aria-label="Zwiń"><svg><use href="#col"/></svg></button><button aria-label="Usuń warstwę"><svg><use href="#rem"/></svg></button></div>
<div class="tree layers">
<div class="lrow first"><input type="checkbox" id="c1" checked><i class="sw purple"></i><label for="c1"><u>ramka_2km</u></label><svg class="chip"><use href="#chip"/></svg></div>
<div class="lrow second"><svg class="s8"><use href="#opened"/></svg><input type="checkbox" id="c2" checked><svg class="s12"><use href="#rastsm"/></svg><label for="c2">NMT_100m_czarna_dabrowka</label></div>
<div class="lrow sub"><i class="sw black"></i><span>38.23</span></div>
<div class="lrow sub"><i class="sw blank"></i><span>238.49</span></div>
</div>
</section>
<section class="dock fill">
<div class="dtitle"><h2>Przeglądarka</h2><button aria-label="Odłącz"><svg class="s12"><use href="#float"/></svg></button><button aria-label="Zamknij"><svg class="s12"><use href="#close"/></svg></button></div>
<div class="dtools"><button aria-label="Dodaj"><svg><use href="#addl"/></svg></button><button aria-label="Odśwież"><svg><use href="#refresh"/></svg></button><button aria-label="Filtruj"><svg><use href="#funnel"/></svg></button><button aria-label="Zwiń"><svg><use href="#col"/></svg></button><button aria-label="Właściwości"><svg><use href="#inf2"/></svg></button></div>
<div class="tree browser">
<div class="rows">
<div class="brow"><svg class="s8"><use href="#closed"/></svg><svg class="s14"><use href="#folder"/></svg><span>atlasy_studentow</span></div>
<div class="brow"><svg class="s8"><use href="#closed"/></svg><svg class="s14"><use href="#folder"/></svg><span>pomorskie-latest-free.shp</span></div>
<div class="brow"><svg class="s8"><use href="#opened"/></svg><svg class="s14"><use href="#folder2"/></svg><span>test</span></div>
<div class="brow d1"><svg class="s8"><use href="#opened"/></svg><svg class="s14"><use href="#db"/></svg><span>baza_gis_czarna_dabrowka.gpkg</span></div>
<div class="brow d2 sel"><svg class="s14"><use href="#poly"/></svg><span>granica_gminy</span></div>
<div class="brow d2"><svg class="s14"><use href="#poly"/></svg><span>ramka_2km</span></div>
<div class="brow"><svg class="s8"><use href="#closed"/></svg><svg class="s14"><use href="#db"/></svg><span>baza_gis_cewice.gpkg</span></div>
<div class="brow"><svg class="s8"><use href="#closed"/></svg><svg class="s14"><use href="#db"/></svg><span>baza_gis_choczewo.gpkg</span></div>
<div class="brow"><svg class="s8"><use href="#closed"/></svg><svg class="s14"><use href="#db"/></svg><span>baza_gis_lebork.gpkg</span></div>
<div class="brow"><svg class="s8"><use href="#closed"/></svg><svg class="s14"><use href="#db"/></svg><span>baza_gis_szemud.gpkg</span></div>
</div>
<div class="vscroll"><i class="up"></i><i class="thumb"></i></div>
</div>
</section>
</div>
<section class="canvas"><div class="shape"></div></section>
<aside class="style"><div class="styler">
<div class="dtitle"><h2>Stylizacja warstw</h2></div>
<div class="cwrap top"><svg class="s14"><use href="#poly"/></svg><select class="combo" aria-label="Warstwa"><option>ramka_2km</option></select></div>
<div class="scols">
<div class="tabs"><button class="cur" aria-label="Symbolizacja"><svg><use href="#brush2"/></svg></button><button aria-label="Etykiety"><svg><use href="#abc"/></svg></button><button aria-label="Widok 3D"><svg><use href="#cube"/></svg></button><button aria-label="Diagramy"><svg><use href="#tree3"/></svg></button><button aria-label="Historia"><svg><use href="#hist"/></svg></button></div>
<div class="props">
<div class="cwrap kind"><svg class="s12"><use href="#single"/></svg><select class="combo" aria-label="Typ symbolu"><option>Jeden symbol</option></select></div>
<div class="tree symbols">
<div class="lrow fillrow"><svg class="s8"><use href="#opened"/></svg><i class="sw purple"></i><b>Wypełnienie</b></div>
<div class="lrow simple"><i class="sw red"></i><span>Proste wypełnienie</span></div>
</div>
<div class="sbtns"><button class="live" aria-label="Dodaj symbol"><svg class="s14"><use href="#plusg"/></svg></button><button aria-label="Usuń symbol"><svg class="s14"><use href="#minusg"/></svg></button><button aria-label="Zablokuj"><svg class="s14"><use href="#lock"/></svg></button><button aria-label="Powiel"></button></div>
<div class="form">
<label for="u">Jednostka</label><select class="combo" id="u"><option>mm</option></select>
<label for="k">Krycie</label><input type="range" id="k" value="100">
<label for="kol">Kolor</label><button class="color" id="kol"><i></i></button>
</div>
<label class="fav"><svg class="s12"><use href="#mag"/></svg><input type="text" value="Ulubione" aria-label="Szukaj symbolu"></label>
<div class="list"></div>
<div class="hscroll"><i class="lt"></i><i class="hthumb"></i></div>
<button class="more"><i></i>Wyświetlanie warstwy</button>
</div>
</div>
</div></aside>
</main>
</div>
</body>
</html>
```
FILE: styles.css
```css
* { box-sizing: border-box; }
body { margin: 0; font: 10px/16px "Open Sans", "Noto Sans", sans-serif; color: #111; background: #f0f0f0; overflow: hidden; }
button, input, select { font: inherit; color: inherit; }
button { border: 0; padding: 0; margin: 0; background: none; }
h1, h2 { margin: 0; font: inherit; }
svg { display: block; flex: none; width: 20px; height: 20px; }
.sprite { position: absolute; width: 0; height: 0; }
.s8 { width: 8px; height: 8px; }
.s12 { width: 12px; height: 12px; }
.s14 { width: 14px; height: 14px; }
.g10 { font: 11px "Open Sans", sans-serif; fill: #333; }
.g8 { font: bold 7px "Open Sans", sans-serif; fill: #666; }
.gi { font: italic bold 13px "Liberation Serif", serif; fill: #fff; }
.gt { font: bold 12px "Liberation Serif", serif; fill: #34474f; }
.ga { font: bold 7px "Open Sans", sans-serif; fill: #222; }

.window { display: flex; flex-direction: column; height: 100vh; }
.titlebar { position: relative; display: flex; align-items: center; gap: 4px; height: 19px; overflow: hidden; border-bottom: 1px solid #5b6f86;
  background: linear-gradient(90deg, #c3d6ea 0, #bcd2ea 130px, #8fb6e0 185px, #b4d5f4 240px, #bcdcf8 370px, #a9cdf0 400px, #2c5486 425px, #4c7099 460px, #3f678f 520px, #5a7fa5 590px, #2e5580 650px, #46688f 690px, #6484a6 720px, #2b5080 745px, #244a78 860px, #2d5585 940px, #2a5383 100%); }
.ghost { position: absolute; bottom: 3px; height: 7px; filter: blur(3px); background: #5c7d9e; opacity: .5; }
.g1 { left: 155px; width: 205px; }
.g2 { left: 378px; width: 168px; background: #a3b3c4; }
.g3 { left: 574px; width: 84px; background: #b6a9b8; }
.menubar { display: flex; gap: 11px; height: 18px; padding: 0 7px; white-space: nowrap; background: linear-gradient(#fff 0, #f2f5fb 40%, #d8def0 50%, #dfe4f3 100%); border-bottom: 1px solid #c5c5cb; }

.bar { display: flex; height: 28px; overflow: hidden; border-bottom: 1px solid #bdbdbd; background: #f0f0f0; }
.group { display: flex; align-items: center; flex: none; border-right: 1px solid #c0c0c0; }
.group::before { content: ""; align-self: stretch; width: 2px; margin: 3px 2px 3px 3px; background: repeating-linear-gradient(#aaa 0 1px, transparent 1px 3px); }
.group.wide { padding-right: 14px; }
.group.last { border-right: 0; }
.tb { display: flex; align-items: center; justify-content: center; flex: none; width: 26px; height: 26px; border-radius: 3px; }
.tb.on { border: 1px solid #555; background: #dcdcdc; }
.tb.menu { width: 36px; justify-content: flex-start; padding-left: 3px; gap: 3px; }
.menu::after { content: ""; flex: none; border: 4px solid transparent; border-top-color: #111; border-bottom: 0; }
.off svg { filter: grayscale(1); opacity: .32; }
.off.menu::after { opacity: .6; }
.combo { appearance: none; height: 18px; padding: 0 1px; border: 1px solid #777; border-radius: 2px; background: linear-gradient(#f4f4f4 0, #ebebeb 48%, #dcdcdc 50%, #d0d0d0 100%); }
.num { width: 64px; height: 16px; padding: 0 2px; border: 1px solid #dcdcdc; background: #fff; }
.num::-webkit-inner-spin-button { opacity: 1; }
.unit { width: 46px; background: linear-gradient(45deg, transparent 50%, #111 50%) 33px 6px / 4px 4px no-repeat, linear-gradient(-45deg, transparent 50%, #111 50%) 37px 6px / 4px 4px no-repeat, linear-gradient(#f4f4f4 0, #e8e8e8 48%, #d4d4d4 100%); }

.main { display: flex; flex: 1; min-height: 0; }
.side { width: 37px; padding-top: 7px; margin-top: 1px; background: linear-gradient(90deg, #bbb 50%, transparent 50%) 3px 2px / 3px 1px repeat-x #f0f0f0; }
.sb { display: flex; align-items: center; gap: 5px; width: 100%; height: 25px; padding-left: 4px; }
.sb::after { border-width: 4px 3px 0; }
.docks { display: flex; flex-direction: column; width: 320px; padding: 1px 4px 0 2px; border-right: 1px solid #999; }
.dtitle { display: flex; align-items: center; gap: 6px; height: 20px; padding: 0 4px; background: #dadada; border-top: 1px solid #cacaca; }
.dtitle h2 { flex: 1; white-space: nowrap; }
.dtools { display: flex; align-items: center; gap: 1px; height: 24px; padding-left: 2px; }
.dtools button { display: flex; align-items: center; justify-content: center; gap: 2px; width: 18px; height: 18px; }
.dtools svg { width: 14px; height: 14px; }
.dtools .on { border: 1px solid #666; border-radius: 3px; background: #dadada; }
.dtools .menu { width: 29px; }
.tree { background: #fff; border: 1px solid #8c8f94; }
.layers { height: 144px; margin-bottom: 5px; }
.lrow { display: flex; align-items: center; gap: 5px; height: 17px; white-space: nowrap; }
.lrow label { font-weight: bold; }
.lrow input { width: 11px; height: 11px; margin: 0; appearance: none; border: 1px solid #8796a8; background: #eef2f6; display: grid; place-items: center; }
.lrow input:checked::before { content: ""; width: 3px; height: 6px; border: solid #3a4f8c; border-width: 0 2px 2px 0; transform: rotate(40deg); }
.first { margin-left: 17px; padding-left: 1px; border: 1px solid #7da2ce; border-radius: 2px; background: linear-gradient(#e4f0fd, #c5defa); }
.first label { flex: 1; }
.chip { width: 14px; height: 12px; }
.second { padding-left: 5px; gap: 6px; }
.sub { padding-left: 36px; }
.sw { flex: none; width: 13px; height: 13px; border: 1px solid #444; }
.purple { background: #9c5079; }
.black { background: #000; }
.blank { border-color: transparent; }
.red { background: #c43c39; }
.fill { display: flex; flex-direction: column; flex: 1; min-height: 0; }
.browser { display: flex; flex: 1; min-height: 0; border-bottom: 0; }
.rows { display: flex; flex-direction: column; flex: 1; padding-bottom: 3px; }
.brow { display: flex; align-items: center; flex: 1; gap: 5px; min-height: 0; margin-left: 72px; white-space: nowrap; }
.d1 { margin-left: 89px; }
.d2 { margin-left: 117px; padding-left: 2px; gap: 4px; }
.sel { width: 149px; border: 1px solid #7da2ce; border-radius: 2px; background: linear-gradient(#dcebfc, #c1dbfc); }
.vscroll { display: flex; flex-direction: column; align-items: center; width: 14px; background: #f0f0f0; }
.up { margin-top: 6px; border: 3px solid transparent; border-top: 0; border-bottom-color: #333; }
.thumb { width: 13px; height: 45px; margin-top: 44px; border: 1px solid #979797; border-radius: 2px; background: repeating-linear-gradient(#555 0 1px, transparent 1px 3px) 3px 18px / 5px 7px no-repeat, linear-gradient(90deg, #f5f5f5, #cfcfd2); }

.canvas { display: flex; flex: 1; padding: 37px 178px 23px 17px; background: #fff; border-top: 1px solid #8c8f94; border-right: 1px solid #999; }
.shape { flex: 1; background: #c43c39; border: 1px solid #331c1c; }

.style { width: 129px; padding: 1px 0 0 5px; overflow: hidden; }
.styler { display: flex; flex-direction: column; width: 230px; height: 100%; }
.style .dtitle { padding-left: 2px; }
.cwrap { display: grid; align-items: center; }
.cwrap > * { grid-area: 1 / 1; }
.cwrap svg { z-index: 1; margin-left: 4px; }
.cwrap .combo { width: 100%; }
.kind .combo { padding-left: 15px; }
.top { margin: 5px 0 0 1px; }
.top .combo { padding-left: 15px; }
.top svg { margin-left: 2px; }
.scols { display: flex; flex: 1; min-height: 0; padding-left: 1px; }
.tabs { width: 31px; background: #5b5b5b; }
.tabs button { display: flex; align-items: center; justify-content: center; width: 100%; height: 28px; }
.tabs .cur { height: 34px; background: #f0f0f0; }
.props { flex: 1; padding: 5px 0 0 3px; }
.symbols { height: 114px; margin-top: 5px; }
.fillrow { padding-left: 6px; gap: 5px; background: #f4f4f4; }
.simple { padding-left: 36px; }
.sbtns { display: flex; gap: 7px; padding: 5px 0 5px 1px; border-bottom: 1px solid #c4c4c4; }
.sbtns button { display: flex; align-items: center; justify-content: center; width: 21px; height: 19px; border: 1px solid #ccc; border-radius: 2px; }
.sbtns .live { border-color: #777; background: #e6e6e6; }
.form { display: grid; grid-template-columns: 44px 1fr; align-items: center; height: 114px; grid-template-rows: 17px 17px 17px; align-content: start; padding-top: 7px; border-bottom: 1px solid #c4c4c4; }
.form input { appearance: none; height: 2px; margin: 0; background: #bbb; }
.color { height: 17px; padding: 2px 3px; border: 1px solid #777; border-radius: 2px; background: #eee; }
.color i { display: block; height: 100%; background: #c43c39; }
.fav { display: flex; align-items: center; gap: 3px; height: 17px; margin-top: 7px; padding-left: 9px; background: #fff; border: 1px solid #e2e2e2; }
.fav input { flex: 1; min-width: 0; height: 14px; border: 0; padding: 0; background: none; }
.list { height: 16px; margin-top: 4px; background: #fff; border: 1px solid #999; border-bottom: 0; }
.hscroll { display: flex; align-items: center; height: 14px; padding-left: 5px; gap: 8px; }
.lt { border: 3px solid transparent; border-left: 0; border-right-color: #333; }
.hthumb { flex: 1; height: 12px; border: 1px solid #979797; background: linear-gradient(#f5f5f5, #cfcfd2); }
.more { display: flex; align-items: center; gap: 7px; margin: 9px 0 0 4px; font-weight: bold; white-space: nowrap; }
.more i { border: 4px solid transparent; border-left: 6px solid #222; border-right: 0; }
```
